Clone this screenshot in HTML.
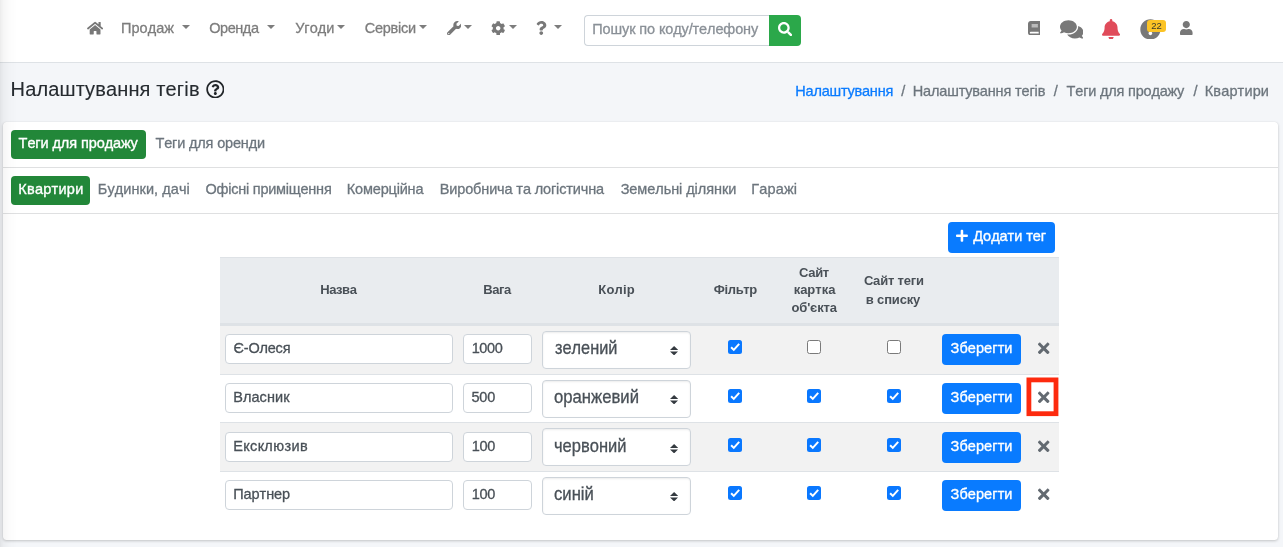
<!DOCTYPE html>
<html lang="uk">
<head>
<meta charset="utf-8">
<title>Налаштування тегів</title>
<style>
*{box-sizing:border-box}
html,body{margin:0;padding:0}
body{width:1283px;height:547px;overflow:hidden;background:#f4f6f9;font-family:"Liberation Sans",sans-serif;font-size:14.5px;color:#212529;position:relative;font-kerning:none}
#wrap{position:absolute;left:0;top:0;width:1283px;height:547px;will-change:transform}
.t{position:absolute;white-space:nowrap;display:block}
.i{position:absolute;display:block}
.leftshade{position:absolute;left:0;top:0;width:26px;height:547px;background:linear-gradient(to right,rgba(0,0,0,.075),rgba(0,0,0,.038) 3px,rgba(0,0,0,.016) 8px,rgba(0,0,0,0) 17px);pointer-events:none}
.navbar{position:absolute;left:0;top:0;width:1283px;height:63px;background:#fff;border-bottom:1px solid #dee2e6}
.caret{position:absolute;top:25px;width:0;height:0;border-left:4.300px solid transparent;border-right:4.300px solid transparent;border-top:4.300px solid #7d7d7d}
.search{position:absolute;left:584px;top:15px;width:186px;height:31px;border:1px solid #ced4da;border-right:0;border-radius:4px 0 0 4px;background:#fff}
.sbtn{position:absolute;left:769px;top:15px;width:32px;height:31px;background:#2ba84a;border-radius:0 4px 4px 0}
.badge{position:absolute;left:1147px;top:20px;width:19px;height:12px;border-radius:3px;background:#fbc325;color:#3a3a2a;font-size:9.500px;line-height:12px;text-align:center}
.card{position:absolute;left:3px;top:122px;width:1274.500px;height:418px;background:#fff;border-radius:3.500px;box-shadow:0 0 1px rgba(0,0,0,.125),0 1px 3px rgba(0,0,0,.2)}
.hr{position:absolute;left:3px;width:1274.500px;height:1px;background:#dfe0e1}
.pillbg{position:absolute;background:#228739;border-radius:4px}
.btn{position:absolute;background:#097bff;border-radius:4px}
.thead{position:absolute;left:220px;top:257px;width:839px;height:68px;background:#e9ecef;border-top:1px solid #dee2e6;border-bottom:2px solid #dee2e6}
.row{position:absolute;left:220px;width:839px;border-top:1px solid #dee2e6}
.row.odd{background:#f2f2f2}
.inp{position:absolute;height:30px;border:1px solid #ced4da;border-radius:4px;background:#fff}
.sel{position:absolute;left:542px;width:148.500px;height:37.500px;border:1px solid #ced4da;border-radius:4px;background:#fff;box-shadow:inset 0 1px 2px rgba(0,0,0,.075)}
.cb{position:absolute;width:14px;height:14px;border-radius:2.500px}
.cb.on{background:#0a78ff}
.cb.off{background:#fff;border:1px solid #7a7a7a}
.cb svg{position:absolute;left:0;top:0}
.redbox{position:absolute;left:1026px;top:377.600px;width:32.600px;height:38.500px;border:5px solid #fd2a0e}
</style>
</head>
<body>
<div id="wrap">
<div class="navbar"></div>
<svg class="i" style="left:86.90px;top:20.80px" width="16.20" height="14.40" viewBox="0 0 576 512"><path fill="#787878" d="M280.37 148.26L96 300.11V464a16 16 0 0 0 16 16l112.06-.29a16 16 0 0 0 15.92-16V368a16 16 0 0 1 16-16h64a16 16 0 0 1 16 16v95.64a16 16 0 0 0 16 16.05L464 480a16 16 0 0 0 16-16V300L295.67 148.26a12.19 12.19 0 0 0-15.3 0zM571.6 251.47L488 182.56V44.05a12 12 0 0 0-12-12h-56a12 12 0 0 0-12 12v72.61L318.47 43a48 48 0 0 0-61 0L4.34 251.47a12 12 0 0 0-1.6 16.9l25.5 31A12 12 0 0 0 45.15 301l235.22-193.74a12.19 12.19 0 0 1 15.3 0L530.9 301a12 12 0 0 0 16.9-1.6l25.5-31a12 12 0 0 0-1.7-16.93z"/></svg>
<span class="t" style="left:121.07px;top:18.10px;font-size:14.5px;line-height:20px;letter-spacing:0.030px;color:#7d7d7d;-webkit-text-stroke:.3px #7d7d7d;">Продаж</span>
<span class="t" style="left:209.16px;top:18.10px;font-size:14.5px;line-height:20px;letter-spacing:-0.431px;color:#7d7d7d;-webkit-text-stroke:.3px #7d7d7d;">Оренда</span>
<span class="t" style="left:295.16px;top:18.10px;font-size:14.5px;line-height:20px;letter-spacing:-0.007px;color:#7d7d7d;-webkit-text-stroke:.3px #7d7d7d;">Угоди</span>
<span class="t" style="left:364.71px;top:18.10px;font-size:14.5px;line-height:20px;letter-spacing:-0.239px;color:#7d7d7d;-webkit-text-stroke:.3px #7d7d7d;">Сервіси</span>
<i class="caret" style="left:181.7px"></i>
<i class="caret" style="left:266.6px"></i>
<i class="caret" style="left:336.5px"></i>
<i class="caret" style="left:419.4px"></i>
<i class="caret" style="left:464.0px"></i>
<i class="caret" style="left:509.2px"></i>
<i class="caret" style="left:554.0px"></i>
<svg class="i" style="left:446.50px;top:20.80px" width="14.40" height="14.40" viewBox="0 0 512 512"><path fill="#787878" d="M507.73 109.1c-2.24-9.03-13.54-12.09-20.12-5.51l-74.36 74.36-67.88-11.31-11.31-67.88 74.36-74.36c6.62-6.62 3.43-17.9-5.66-20.16-47.38-11.74-99.55.91-136.58 37.93-39.64 39.64-50.55 97.1-34.05 147.2L18.74 402.76c-24.99 24.99-24.99 65.51 0 90.5 24.99 24.99 65.51 24.99 90.5 0l213.21-213.21c50.12 16.71 107.47 5.68 147.37-34.22 37.07-37.07 49.7-89.32 37.91-136.73zM64 472c-13.25 0-24-10.75-24-24 0-13.26 10.75-24 24-24s24 10.74 24 24c0 13.25-10.75 24-24 24z"/></svg>
<svg class="i" style="left:491.20px;top:20.80px" width="14.40" height="14.40" viewBox="0 0 512 512"><path fill="#787878" d="M487.4 315.7l-42.6-24.6c4.3-23.2 4.3-47 0-70.2l42.6-24.6c4.9-2.8 7.1-8.6 5.5-14-11.1-35.6-30-67.800-54.700-94.600-3.800-4.100-10-5.100-14.800-2.300L380.800 110c-17.900-15.400-38.500-27.300-60.800-35.100V25.800c0-5.600-3.900-10.500-9.400-11.700-36.700-8.200-74.300-7.800-109.200 0-5.500 1.200-9.400 6.100-9.400 11.700V75c-22.200 7.900-42.800 19.800-60.800 35.100L88.700 85.500c-4.900-2.800-11-1.900-14.800 2.300-24.700 26.700-43.600 58.900-54.700 94.600-1.700 5.400.6 11.200 5.500 14L67.300 221c-4.300 23.200-4.300 47 0 70.200l-42.600 24.600c-4.900 2.800-7.100 8.600-5.500 14 11.100 35.600 30 67.800 54.700 94.600 3.800 4.100 10 5.100 14.800 2.300l42.600-24.600c17.900 15.400 38.500 27.300 60.800 35.100v49.200c0 5.600 3.900 10.500 9.400 11.700 36.700 8.200 74.300 7.800 109.200 0 5.500-1.200 9.400-6.100 9.400-11.700v-49.200c22.200-7.900 42.800-19.800 60.800-35.100l42.600 24.600c4.900 2.800 11 1.900 14.800-2.300 24.700-26.700 43.600-58.900 54.700-94.600 1.500-5.500-.7-11.300-5.600-14.100zM256 336c-44.100 0-80-35.900-80-80s35.900-80 80-80 80 35.900 80 80-35.900 80-80 80z"/></svg>
<svg class="i" style="left:536.30px;top:20.90px" width="10.50" height="14.00" viewBox="0 0 384 512"><path fill="#787878" d="M202.021 0C122.202 0 70.503 32.703 29.914 91.026c-7.363 10.580-5.093 25.086 5.178 32.874l43.138 32.709c10.373 7.865 25.132 6.026 33.253-4.148 25.049-31.381 43.630-49.449 82.757-49.449 30.764 0 68.816 19.799 68.816 49.631 0 22.552-18.617 34.134-48.993 51.164-35.423 19.860-82.299 44.576-82.299 106.405V320c0 13.255 10.745 24 24 24h72.471c13.255 0 24-10.745 24-24v-5.773c0-42.860 125.268-44.645 125.268-160.627C377.504 66.256 286.902 0 202.021 0zM192 373.459c-38.196 0-69.271 31.075-69.271 69.271 0 38.195 31.075 69.270 69.271 69.270s69.271-31.075 69.271-69.271-31.075-69.270-69.271-69.270z"/></svg>
<div class="search"></div>
<span class="t" style="left:592.27px;top:19.20px;font-size:14.5px;line-height:20px;letter-spacing:-0.110px;color:#8a9097;-webkit-text-stroke:.3px #8a9097;">Пошук по коду/телефону</span>
<div class="sbtn"></div>
<svg class="i" style="left:777.50px;top:21.50px" width="14.40" height="14.40" viewBox="0 0 512 512"><path fill="#fff" d="M505 442.7L405.300 343c-4.500-4.500-10.600-7-17-7H372c27.600-35.300 44-79.700 44-128C416 93.100 322.900 0 208 0S0 93.100 0 208s93.100 208 208 208c48.300 0 92.700-16.400 128-44v16.300c0 6.400 2.500 12.500 7 17l99.700 99.700c9.400 9.400 24.600 9.400 33.900 0l28.300-28.300c9.400-9.400 9.400-24.600.1-34zM208 336c-70.700 0-128-57.200-128-128 0-70.700 57.200-128 128-128 70.700 0 128 57.200 128 128 0 70.700-57.200 128-128 128z"/></svg>
<svg class="i" style="left:1027.70px;top:20.60px" width="12.60" height="14.40" viewBox="0 0 448 512"><path fill="#787878" d="M448 360V24c0-13.300-10.700-24-24-24H96C43 0 0 43 0 96v320c0 53 43 96 96 96h328c13.300 0 24-10.700 24-24v-16c0-7.500-3.500-14.300-8.900-18.700-4.200-15.400-4.200-59.300 0-74.700 5.400-4.300 8.900-11.100 8.900-18.600zM128 134c0-3.300 2.700-6 6-6h212c3.300 0 6 2.700 6 6v20c0 3.300-2.700 6-6 6H134c-3.300 0-6-2.700-6-6v-20zm0 64c0-3.300 2.700-6 6-6h212c3.300 0 6 2.700 6 6v20c0 3.300-2.700 6-6 6H134c-3.300 0-6-2.700-6-6v-20zm253.400 250H96c-17.700 0-32-14.300-32-32 0-17.600 14.400-32 32-32h285.400c-1.900 17.100-1.900 46.900 0 64z"/></svg>
<svg class="i" style="left:1059.60px;top:18.50px" width="23.40" height="20.80" viewBox="0 0 576 512"><path fill="#787878" d="M416 192c0-88.400-93.100-160-208-160S0 103.600 0 192c0 34.300 14.100 65.900 38 92-13.400 30.200-35.500 54.200-35.800 54.500-2.200 2.300-2.800 5.700-1.500 8.700S4.800 352 8 352c36.600 0 66.900-12.300 88.700-25 32.200 15.700 70.300 25 111.300 25 114.900 0 208-71.600 208-160zm122 220c23.900-26 38-57.700 38-92 0-66.900-53.500-124.200-129.300-148.100.9 6.600 1.300 13.300 1.300 20.100 0 105.900-107.700 192-240 192-10.800 0-21.300-.8-31.700-1.900C207.800 439.600 281.800 480 368 480c41 0 79.100-9.200 111.300-25 21.800 12.700 52.100 25 88.700 25 3.200 0 6.100-1.900 7.300-4.800 1.300-2.900.7-6.300-1.500-8.700-.3-.3-22.400-24.200-35.800-54.500z"/></svg>
<svg class="i" style="left:1102.30px;top:18.60px" width="18.11" height="20.70" viewBox="0 0 448 512"><path fill="#e04b5a" d="M224 512c35.320 0 63.970-28.650 63.970-64H160.030c0 35.350 28.650 64 63.970 64zm215.390-149.710c-19.320-20.760-55.470-51.990-55.470-154.290 0-77.700-54.480-139.900-127.940-155.160V32c0-17.670-14.320-32-31.980-32s-31.980 14.330-31.980 32v20.840C118.560 68.100 64.080 130.300 64.080 208c0 102.300-36.150 133.530-55.470 154.290-6 6.450-8.660 14.160-8.610 21.710.11 16.400 12.980 32 32.100 32h383.800c19.120 0 32-15.600 32.100-32 .05-7.550-2.610-15.270-8.610-21.710z"/></svg>
<svg class="i" style="left:1139.90px;top:18.70px" width="20.80" height="20.80" viewBox="0 0 512 512"><path fill="#787878" d="M504 256c0 136.997-111.043 248-248 248S8 392.997 8 256C8 119.083 119.043 8 256 8s248 111.083 248 248zm-248 50c-25.405 0-46 20.595-46 46s20.595 46 46 46 46-20.595 46-46-20.595-46-46-46zm-43.673-165.346l7.418 136c.347 6.364 5.609 11.346 11.982 11.346h48.546c6.373 0 11.635-4.982 11.982-11.346l7.418-136c.375-6.874-5.098-12.654-11.982-12.654h-63.383c-6.884 0-12.356 5.780-11.981 12.654z"/></svg>
<div class="badge">22</div>
<svg class="i" style="left:1180.00px;top:20.80px" width="12.60" height="14.40" viewBox="0 0 448 512"><path fill="#787878" d="M224 256c70.700 0 128-57.300 128-128S294.700 0 224 0 96 57.300 96 128s57.300 128 128 128zm89.600 32h-16.700c-22.200 10.200-46.900 16-72.900 16s-50.600-5.800-72.900-16h-16.700C60.200 288 0 348.200 0 422.400V464c0 26.500 21.500 48 48 48h352c26.500 0 48-21.500 48-48v-41.600c0-74.200-60.200-134.400-134.400-134.400z"/></svg>
<span class="t" style="left:10.61px;top:75.50px;font-size:20px;line-height:26px;letter-spacing:0.146px;color:#262b30;-webkit-text-stroke:.12px #262b30;">Налаштування тегів</span>
<svg class="i" style="left:205.50px;top:79.70px" width="18.70" height="18.70" viewBox="0 0 512 512"><path fill="#212529" d="M256 8C119.043 8 8 119.083 8 256c0 136.997 111.043 248 248 248s248-111.003 248-248C504 119.083 392.957 8 256 8zm0 448c-110.532 0-200-89.431-200-200 0-110.495 89.472-200 200-200 110.491 0 200 89.471 200 200 0 110.530-89.431 200-200 200zm107.244-255.200c0 67.052-72.421 68.084-72.421 92.863V300c0 6.627-5.373 12-12 12h-45.647c-6.627 0-12-5.373-12-12v-8.659c0-35.745 27.100-50.034 47.579-61.516 17.561-9.845 28.324-16.541 28.324-29.579 0-17.246-21.999-28.693-39.784-28.693-23.189 0-33.894 10.977-48.942 29.969-4.057 5.120-11.460 6.071-16.666 2.124l-27.824-21.098c-5.107-3.872-6.251-11.066-2.644-16.363C184.846 131.491 214.940 112 261.794 112c49.071 0 101.450 38.304 101.450 88.800zM298 368c0 23.159-18.841 42-42 42s-42-18.841-42-42 18.841-42 42-42 42 18.841 42 42z"/></svg>
<span class="t" style="left:795.26px;top:80.90px;font-size:14.5px;line-height:20px;letter-spacing:-0.193px;color:#0a7bff;-webkit-text-stroke:.3px #0a7bff;">Налаштування</span>
<span class="t" style="left:901.25px;top:80.90px;font-size:14.5px;line-height:20px;letter-spacing:0.000px;color:#6c757d;-webkit-text-stroke:.3px #6c757d;">/</span>
<span class="t" style="left:912.76px;top:80.90px;font-size:14.5px;line-height:20px;letter-spacing:-0.150px;color:#6c757d;-webkit-text-stroke:.3px #6c757d;">Налаштування тегів</span>
<span class="t" style="left:1053.75px;top:80.90px;font-size:14.5px;line-height:20px;letter-spacing:0.000px;color:#6c757d;-webkit-text-stroke:.3px #6c757d;">/</span>
<span class="t" style="left:1066.62px;top:80.90px;font-size:14.5px;line-height:20px;letter-spacing:-0.189px;color:#6c757d;-webkit-text-stroke:.3px #6c757d;">Теги для продажу</span>
<span class="t" style="left:1193.55px;top:80.90px;font-size:14.5px;line-height:20px;letter-spacing:0.000px;color:#6c757d;-webkit-text-stroke:.3px #6c757d;">/</span>
<span class="t" style="left:1204.76px;top:80.90px;font-size:14.5px;line-height:20px;letter-spacing:0.145px;color:#6c757d;-webkit-text-stroke:.3px #6c757d;">Квартири</span>
<div class="card"></div>
<div class="pillbg" style="left:11px;top:130px;width:135px;height:29px"></div>
<span class="t" style="left:18.62px;top:133.30px;font-size:14.5px;line-height:20px;letter-spacing:-0.089px;color:#fff;-webkit-text-stroke:.35px #fff;">Теги для продажу</span>
<span class="t" style="left:155.52px;top:133.30px;font-size:14.5px;line-height:20px;letter-spacing:-0.169px;color:#6c757d;-webkit-text-stroke:.3px #6c757d;">Теги для оренди</span>
<div class="hr" style="top:167px"></div>
<div class="pillbg" style="left:11px;top:176px;width:79px;height:29px"></div>
<span class="t" style="left:18.26px;top:179.40px;font-size:14.5px;line-height:20px;letter-spacing:0.259px;color:#fff;-webkit-text-stroke:.35px #fff;">Квартири</span>
<span class="t" style="left:97.86px;top:179.40px;font-size:14.5px;line-height:20px;letter-spacing:0.061px;color:#6c757d;-webkit-text-stroke:.3px #6c757d;">Будинки, дачі</span>
<span class="t" style="left:205.46px;top:179.40px;font-size:14.5px;line-height:20px;letter-spacing:-0.232px;color:#6c757d;-webkit-text-stroke:.3px #6c757d;">Офісні приміщення</span>
<span class="t" style="left:346.86px;top:179.40px;font-size:14.5px;line-height:20px;letter-spacing:-0.191px;color:#6c757d;-webkit-text-stroke:.3px #6c757d;">Комерційна</span>
<span class="t" style="left:439.76px;top:179.40px;font-size:14.5px;line-height:20px;letter-spacing:-0.134px;color:#6c757d;-webkit-text-stroke:.3px #6c757d;">Виробнича та логістична</span>
<span class="t" style="left:620.68px;top:179.40px;font-size:14.5px;line-height:20px;letter-spacing:-0.066px;color:#6c757d;-webkit-text-stroke:.3px #6c757d;">Земельні ділянки</span>
<span class="t" style="left:751.36px;top:179.40px;font-size:14.5px;line-height:20px;letter-spacing:0.120px;color:#6c757d;-webkit-text-stroke:.3px #6c757d;">Гаражі</span>
<div class="hr" style="top:213px"></div>
<div class="btn" style="left:948px;top:222px;width:107px;height:31px"></div>
<svg class="i" style="left:956.40px;top:229.45px" width="11.90" height="13.60" viewBox="0 0 448 512"><path fill="#fff" d="M416 208H272V64c0-17.670-14.330-32-32-32h-32c-17.670 0-32 14.330-32 32v144H32c-17.670 0-32 14.330-32 32v32c0 17.670 14.330 32 32 32h144v144c0 17.670 14.330 32 32 32h32c17.670 0 32-14.330 32-32V304h144c17.670 0 32-14.330 32-32v-32c0-17.670-14.330-32-32-32z"/></svg>
<span class="t" style="left:973.34px;top:226.20px;font-size:14.5px;line-height:20px;letter-spacing:-0.038px;color:#fff;-webkit-text-stroke:.35px #fff;">Додати тег</span>
<div class="thead"></div>
<span class="t" style="left:320.18px;top:281.30px;font-size:13px;line-height:18px;letter-spacing:-0.404px;color:#495057;font-weight:700;">Назва</span>
<span class="t" style="left:483.28px;top:281.30px;font-size:13px;line-height:18px;letter-spacing:-0.425px;color:#495057;font-weight:700;">Вага</span>
<span class="t" style="left:598.28px;top:281.30px;font-size:13px;line-height:18px;letter-spacing:0.179px;color:#495057;font-weight:700;">Колір</span>
<span class="t" style="left:713.70px;top:281.30px;font-size:13px;line-height:18px;letter-spacing:-0.336px;color:#495057;font-weight:700;">Фільтр</span>
<span class="t" style="left:799.12px;top:263.50px;font-size:13px;line-height:18px;letter-spacing:-0.294px;color:#495057;font-weight:700;">Сайт</span>
<span class="t" style="left:793.65px;top:281.30px;font-size:13px;line-height:18px;letter-spacing:-0.012px;color:#495057;font-weight:700;">картка</span>
<span class="t" style="left:791.44px;top:299.30px;font-size:13px;line-height:18px;letter-spacing:-0.136px;color:#495057;font-weight:700;">об'єкта</span>
<span class="t" style="left:863.92px;top:272.40px;font-size:13px;line-height:18px;letter-spacing:-0.195px;color:#495057;font-weight:700;">Сайт теги</span>
<span class="t" style="left:865.84px;top:290.60px;font-size:13px;line-height:18px;letter-spacing:-0.167px;color:#495057;font-weight:700;">в списку</span>
<div class="row odd" style="top:325px;height:49px"></div>
<div class="inp" style="left:225px;top:334px;width:228px"></div>
<span class="t" style="left:233.51px;top:338.20px;font-size:14.5px;line-height:20px;letter-spacing:-0.186px;color:#495057;-webkit-text-stroke:.3px #495057;">Є-Олеся</span>
<div class="inp" style="left:463px;top:334px;width:69px"></div>
<span class="t" style="left:471.65px;top:338.20px;font-size:14.5px;line-height:20px;letter-spacing:-0.362px;color:#495057;-webkit-text-stroke:.3px #495057;">1000</span>
<div class="sel" style="top:331px"></div>
<span class="t" style="left:554.76px;top:336.00px;font-size:17.9px;line-height:24px;letter-spacing:0.000px;color:#495057;transform:scaleX(0.9135);transform-origin:0 0;-webkit-text-stroke:.3px #495057;">зелений</span>
<svg class="i" style="left:669.7px;top:345.6px" width="8.200" height="9.400" viewBox="0 0 8.200 9.400"><path fill="#343a40" d="M4.100 0L8.200 4H0zM4.100 9.400L8.200 5.400H0z"/></svg>
<div class="cb on" style="left:728px;top:340px"><svg width="14" height="14" viewBox="0 0 14 14"><path d="M3.100 7.200L5.800 9.900L11.200 3.900" fill="none" stroke="#fff" stroke-width="2"/></svg></div>
<div class="cb off" style="left:807px;top:340px"></div>
<div class="cb off" style="left:887px;top:340px"></div>
<div class="btn" style="left:942px;top:334px;width:79px;height:31px"></div>
<span class="t" style="left:950.58px;top:338.10px;font-size:14.5px;line-height:20px;letter-spacing:0.085px;color:#fff;-webkit-text-stroke:.35px #fff;">Зберегти</span>
<svg class="i" style="left:1038.30px;top:339.91px" width="11.40" height="16.58" viewBox="0 0 352 512"><path fill="#636a71" d="M242.720 256l100.070-100.070c12.280-12.280 12.280-32.190 0-44.480l-22.240-22.240c-12.280-12.280-32.190-12.280-44.480 0L176 189.280 75.930 89.210c-12.280-12.280-32.190-12.280-44.480 0L9.210 111.450c-12.280 12.280-12.280 32.190 0 44.480L109.280 256 9.210 356.070c-12.280 12.280-12.280 32.190 0 44.480l22.240 22.240c12.280 12.280 32.200 12.280 44.480 0L176 322.720l100.070 100.070c12.280 12.280 32.200 12.280 44.480 0l22.240-22.240c12.280-12.280 12.280-32.190 0-44.480L242.720 256z"/></svg>
<div class="row" style="top:374px;height:48px"></div>
<div class="inp" style="left:225px;top:383px;width:228px"></div>
<span class="t" style="left:233.26px;top:387.20px;font-size:14.5px;line-height:20px;letter-spacing:0.054px;color:#495057;-webkit-text-stroke:.3px #495057;">Власник</span>
<div class="inp" style="left:463px;top:383px;width:69px"></div>
<span class="t" style="left:471.47px;top:387.20px;font-size:14.5px;line-height:20px;letter-spacing:-0.223px;color:#495057;-webkit-text-stroke:.3px #495057;">500</span>
<div class="sel" style="top:380px"></div>
<span class="t" style="left:554.45px;top:385.00px;font-size:17.9px;line-height:24px;letter-spacing:0.000px;color:#495057;transform:scaleX(0.9328);transform-origin:0 0;-webkit-text-stroke:.3px #495057;">оранжевий</span>
<svg class="i" style="left:669.7px;top:394.6px" width="8.200" height="9.400" viewBox="0 0 8.200 9.400"><path fill="#343a40" d="M4.100 0L8.200 4H0zM4.100 9.400L8.200 5.400H0z"/></svg>
<div class="cb on" style="left:728px;top:389px"><svg width="14" height="14" viewBox="0 0 14 14"><path d="M3.100 7.200L5.800 9.900L11.200 3.900" fill="none" stroke="#fff" stroke-width="2"/></svg></div>
<div class="cb on" style="left:807px;top:389px"><svg width="14" height="14" viewBox="0 0 14 14"><path d="M3.100 7.200L5.800 9.900L11.200 3.900" fill="none" stroke="#fff" stroke-width="2"/></svg></div>
<div class="cb on" style="left:887px;top:389px"><svg width="14" height="14" viewBox="0 0 14 14"><path d="M3.100 7.200L5.800 9.900L11.200 3.900" fill="none" stroke="#fff" stroke-width="2"/></svg></div>
<div class="btn" style="left:942px;top:383px;width:79px;height:31px"></div>
<span class="t" style="left:950.58px;top:387.10px;font-size:14.5px;line-height:20px;letter-spacing:0.085px;color:#fff;-webkit-text-stroke:.35px #fff;">Зберегти</span>
<svg class="i" style="left:1038.30px;top:388.91px" width="11.40" height="16.58" viewBox="0 0 352 512"><path fill="#636a71" d="M242.720 256l100.070-100.070c12.280-12.280 12.280-32.190 0-44.480l-22.240-22.240c-12.280-12.280-32.190-12.280-44.480 0L176 189.280 75.930 89.210c-12.280-12.280-32.190-12.280-44.480 0L9.210 111.450c-12.280 12.280-12.280 32.190 0 44.480L109.280 256 9.210 356.070c-12.280 12.280-12.280 32.190 0 44.480l22.240 22.240c12.280 12.280 32.200 12.280 44.480 0L176 322.720l100.070 100.070c12.280 12.280 32.200 12.280 44.480 0l22.240-22.240c12.280-12.280 12.280-32.190 0-44.480L242.720 256z"/></svg>
<div class="row odd" style="top:422px;height:49px"></div>
<div class="inp" style="left:225px;top:432px;width:228px"></div>
<span class="t" style="left:233.26px;top:436.20px;font-size:14.5px;line-height:20px;letter-spacing:0.378px;color:#495057;-webkit-text-stroke:.3px #495057;">Ексклюзив</span>
<div class="inp" style="left:463px;top:432px;width:69px"></div>
<span class="t" style="left:471.75px;top:436.20px;font-size:14.5px;line-height:20px;letter-spacing:-0.361px;color:#495057;-webkit-text-stroke:.3px #495057;">100</span>
<div class="sel" style="top:428.4px"></div>
<span class="t" style="left:554.17px;top:434.00px;font-size:17.9px;line-height:24px;letter-spacing:0.000px;color:#495057;transform:scaleX(0.9230);transform-origin:0 0;-webkit-text-stroke:.3px #495057;">червоний</span>
<svg class="i" style="left:669.7px;top:443.6px" width="8.200" height="9.400" viewBox="0 0 8.200 9.400"><path fill="#343a40" d="M4.100 0L8.200 4H0zM4.100 9.400L8.200 5.400H0z"/></svg>
<div class="cb on" style="left:728px;top:438px"><svg width="14" height="14" viewBox="0 0 14 14"><path d="M3.100 7.200L5.800 9.900L11.200 3.900" fill="none" stroke="#fff" stroke-width="2"/></svg></div>
<div class="cb on" style="left:807px;top:438px"><svg width="14" height="14" viewBox="0 0 14 14"><path d="M3.100 7.200L5.800 9.900L11.200 3.900" fill="none" stroke="#fff" stroke-width="2"/></svg></div>
<div class="cb on" style="left:887px;top:438px"><svg width="14" height="14" viewBox="0 0 14 14"><path d="M3.100 7.200L5.800 9.900L11.200 3.900" fill="none" stroke="#fff" stroke-width="2"/></svg></div>
<div class="btn" style="left:942px;top:432px;width:79px;height:31px"></div>
<span class="t" style="left:950.58px;top:436.10px;font-size:14.5px;line-height:20px;letter-spacing:0.085px;color:#fff;-webkit-text-stroke:.35px #fff;">Зберегти</span>
<svg class="i" style="left:1038.30px;top:437.91px" width="11.40" height="16.58" viewBox="0 0 352 512"><path fill="#636a71" d="M242.720 256l100.070-100.070c12.280-12.280 12.280-32.190 0-44.480l-22.240-22.240c-12.280-12.280-32.190-12.280-44.480 0L176 189.280 75.930 89.210c-12.280-12.280-32.190-12.280-44.480 0L9.210 111.450c-12.280 12.280-12.280 32.190 0 44.480L109.280 256 9.210 356.070c-12.280 12.280-12.280 32.190 0 44.480l22.240 22.240c12.280 12.280 32.200 12.280 44.480 0L176 322.720l100.070 100.070c12.280 12.280 32.200 12.280 44.480 0l22.240-22.240c12.280-12.280 12.280-32.190 0-44.480L242.720 256z"/></svg>
<div class="row" style="top:471px;height:49px"></div>
<div class="inp" style="left:225px;top:480px;width:228px"></div>
<span class="t" style="left:233.27px;top:484.20px;font-size:14.5px;line-height:20px;letter-spacing:-0.074px;color:#495057;-webkit-text-stroke:.3px #495057;">Партнер</span>
<div class="inp" style="left:463px;top:480px;width:69px"></div>
<span class="t" style="left:471.75px;top:484.20px;font-size:14.5px;line-height:20px;letter-spacing:-0.361px;color:#495057;-webkit-text-stroke:.3px #495057;">100</span>
<div class="sel" style="top:477.4px"></div>
<span class="t" style="left:554.44px;top:482.00px;font-size:17.9px;line-height:24px;letter-spacing:0.000px;color:#495057;transform:scaleX(0.9312);transform-origin:0 0;-webkit-text-stroke:.3px #495057;">синій</span>
<svg class="i" style="left:669.7px;top:491.6px" width="8.200" height="9.400" viewBox="0 0 8.200 9.400"><path fill="#343a40" d="M4.100 0L8.200 4H0zM4.100 9.400L8.200 5.400H0z"/></svg>
<div class="cb on" style="left:728px;top:486px"><svg width="14" height="14" viewBox="0 0 14 14"><path d="M3.100 7.200L5.800 9.900L11.200 3.900" fill="none" stroke="#fff" stroke-width="2"/></svg></div>
<div class="cb on" style="left:807px;top:486px"><svg width="14" height="14" viewBox="0 0 14 14"><path d="M3.100 7.200L5.800 9.900L11.200 3.900" fill="none" stroke="#fff" stroke-width="2"/></svg></div>
<div class="cb on" style="left:887px;top:486px"><svg width="14" height="14" viewBox="0 0 14 14"><path d="M3.100 7.200L5.800 9.900L11.200 3.900" fill="none" stroke="#fff" stroke-width="2"/></svg></div>
<div class="btn" style="left:942px;top:480px;width:79px;height:31px"></div>
<span class="t" style="left:950.58px;top:484.10px;font-size:14.5px;line-height:20px;letter-spacing:0.085px;color:#fff;-webkit-text-stroke:.35px #fff;">Зберегти</span>
<svg class="i" style="left:1038.30px;top:485.91px" width="11.40" height="16.58" viewBox="0 0 352 512"><path fill="#636a71" d="M242.720 256l100.070-100.070c12.280-12.280 12.280-32.190 0-44.480l-22.240-22.240c-12.280-12.280-32.190-12.280-44.480 0L176 189.280 75.930 89.210c-12.280-12.280-32.190-12.280-44.480 0L9.210 111.450c-12.280 12.280-12.280 32.190 0 44.480L109.280 256 9.210 356.070c-12.280 12.280-12.280 32.190 0 44.480l22.240 22.240c12.280 12.280 32.200 12.280 44.480 0L176 322.720l100.070 100.070c12.280 12.280 32.200 12.280 44.480 0l22.240-22.240c12.280-12.280 12.280-32.190 0-44.480L242.720 256z"/></svg>
<svg class="i" style="left:1020px;top:370px" width="46" height="54" viewBox="0 0 46 54"><rect x="8.900" y="9.900" width="27.100" height="33.800" fill="none" stroke="#fd2a0e" stroke-width="4.800"/></svg>
<div class="leftshade"></div>
</div>
</body>
</html>
